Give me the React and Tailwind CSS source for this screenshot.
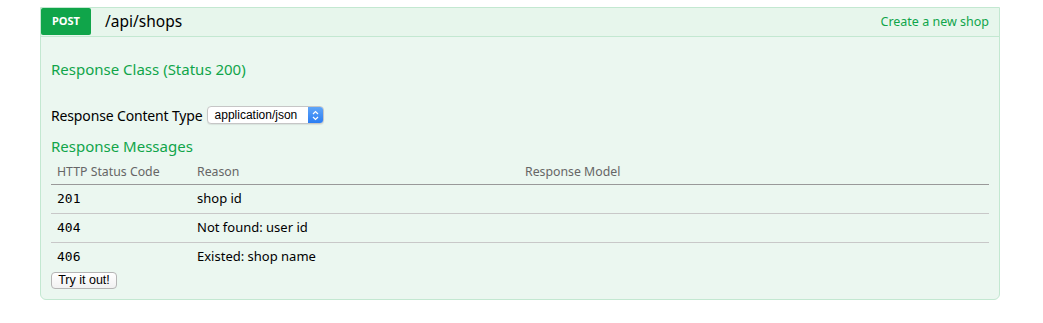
import { useState } from 'react';

const rows = [
    { code: '201', reason: 'shop id' },
    { code: '404', reason: 'Not found: user id' },
    { code: '406', reason: 'Existed: shop name' },
];

export default function App() {
    const [contentType] = useState('application/json');

    return (
        <div
            className="min-h-[323px] w-full bg-white pl-[40px] pt-[7px]"
            style={{ fontFamily: '"Noto Sans", "Open Sans", sans-serif' }}
        >
            <div className="w-[960px] overflow-hidden rounded-b-[6px] border border-[#c3e8d1] bg-[#ebf7f0]">
                {/* Heading */}
                <div className="flex h-[29px] items-center border-b border-[#c3e8d1] bg-[#e7f6ec]">
                    <span className="flex h-[27px] w-[50px] items-center justify-center self-start rounded-[2px] bg-[#10a54a] text-[11px] font-bold text-white">
                        POST
                    </span>
                    <span className="ml-[14px] text-[15.5px] leading-none text-black">/api/shops</span>
                    <span className="ml-auto mr-[10px] text-[12.5px] text-[#10a54a]">Create a new shop</span>
                </div>

                {/* Content */}
                <div className="px-[10px] pb-[10px]">
                    <h4 className="mt-[22px] text-[15px] leading-[20px] text-[#10a54a]">Response Class (Status 200)</h4>

                    <div className="mt-[26px] flex h-[20px] items-center">
                        <span className="text-[14px] tracking-[-0.15px] text-black">Response Content Type</span>
                        <div className="ml-[4px] flex h-[18px] w-[117px] items-center overflow-hidden rounded-[4px] border border-[#c6c6c6] bg-white shadow-[0_1px_1px_rgba(0,0,0,0.08)]">
                            <span
                                className="flex-1 pl-[7px] text-[12px] leading-none text-black"
                                style={{ fontFamily: '"Liberation Sans", Arial, sans-serif' }}
                            >
                                {contentType}
                            </span>
                            <span className="flex h-full w-[15px] items-center justify-center bg-gradient-to-b from-[#5fa5f8] to-[#2a7df2]">
                                <svg width="7" height="11" viewBox="0 0 7 11" fill="none">
                                    <path d="M1 4l2.5-2.5L6 4" stroke="white" strokeWidth="1.2" />
                                    <path d="M1 7l2.5 2.5L6 7" stroke="white" strokeWidth="1.2" />
                                </svg>
                            </span>
                        </div>
                    </div>

                    <h4 className="mt-[11px] text-[15px] leading-[20px] text-[#10a54a]">Response Messages</h4>

                    <table className="mt-[4px] w-full border-collapse text-[13px]">
                        <thead>
                            <tr className="h-[24px] border-b border-[#999] text-left text-[12.3px] text-[#666]">
                                <th className="w-[140px] pl-[6px] font-normal">HTTP Status Code</th>
                                <th className="w-[328px] pl-[6px] font-normal">Reason</th>
                                <th className="pl-[6px] font-normal">Response Model</th>
                            </tr>
                        </thead>
                        <tbody>
                            {rows.map((r, i) => (
                                <tr
                                    key={r.code}
                                    className={
                                        i < rows.length - 1 ? 'h-[29px] border-b border-[#c8c8c8]' : 'h-[28px]'
                                    }
                                >
                                    <td
                                        className="pl-[6px] text-black"
                                        style={{ fontFamily: '"DejaVu Sans Mono", monospace', fontSize: '13px' }}
                                    >
                                        {r.code}
                                    </td>
                                    <td className="pl-[6px] text-black">{r.reason}</td>
                                    <td></td>
                                </tr>
                            ))}
                        </tbody>
                    </table>

                    <button
                        className="mt-[2px] flex h-[17px] w-[66px] items-center justify-center rounded-[4px] border border-[#b5b5b5] bg-gradient-to-b from-white to-[#f1f1f1] text-[12.5px] text-black"
                        style={{ fontFamily: '"Liberation Sans", Arial, sans-serif' }}
                    >
                        Try it out!
                    </button>
                </div>
            </div>
        </div>
    );
}
